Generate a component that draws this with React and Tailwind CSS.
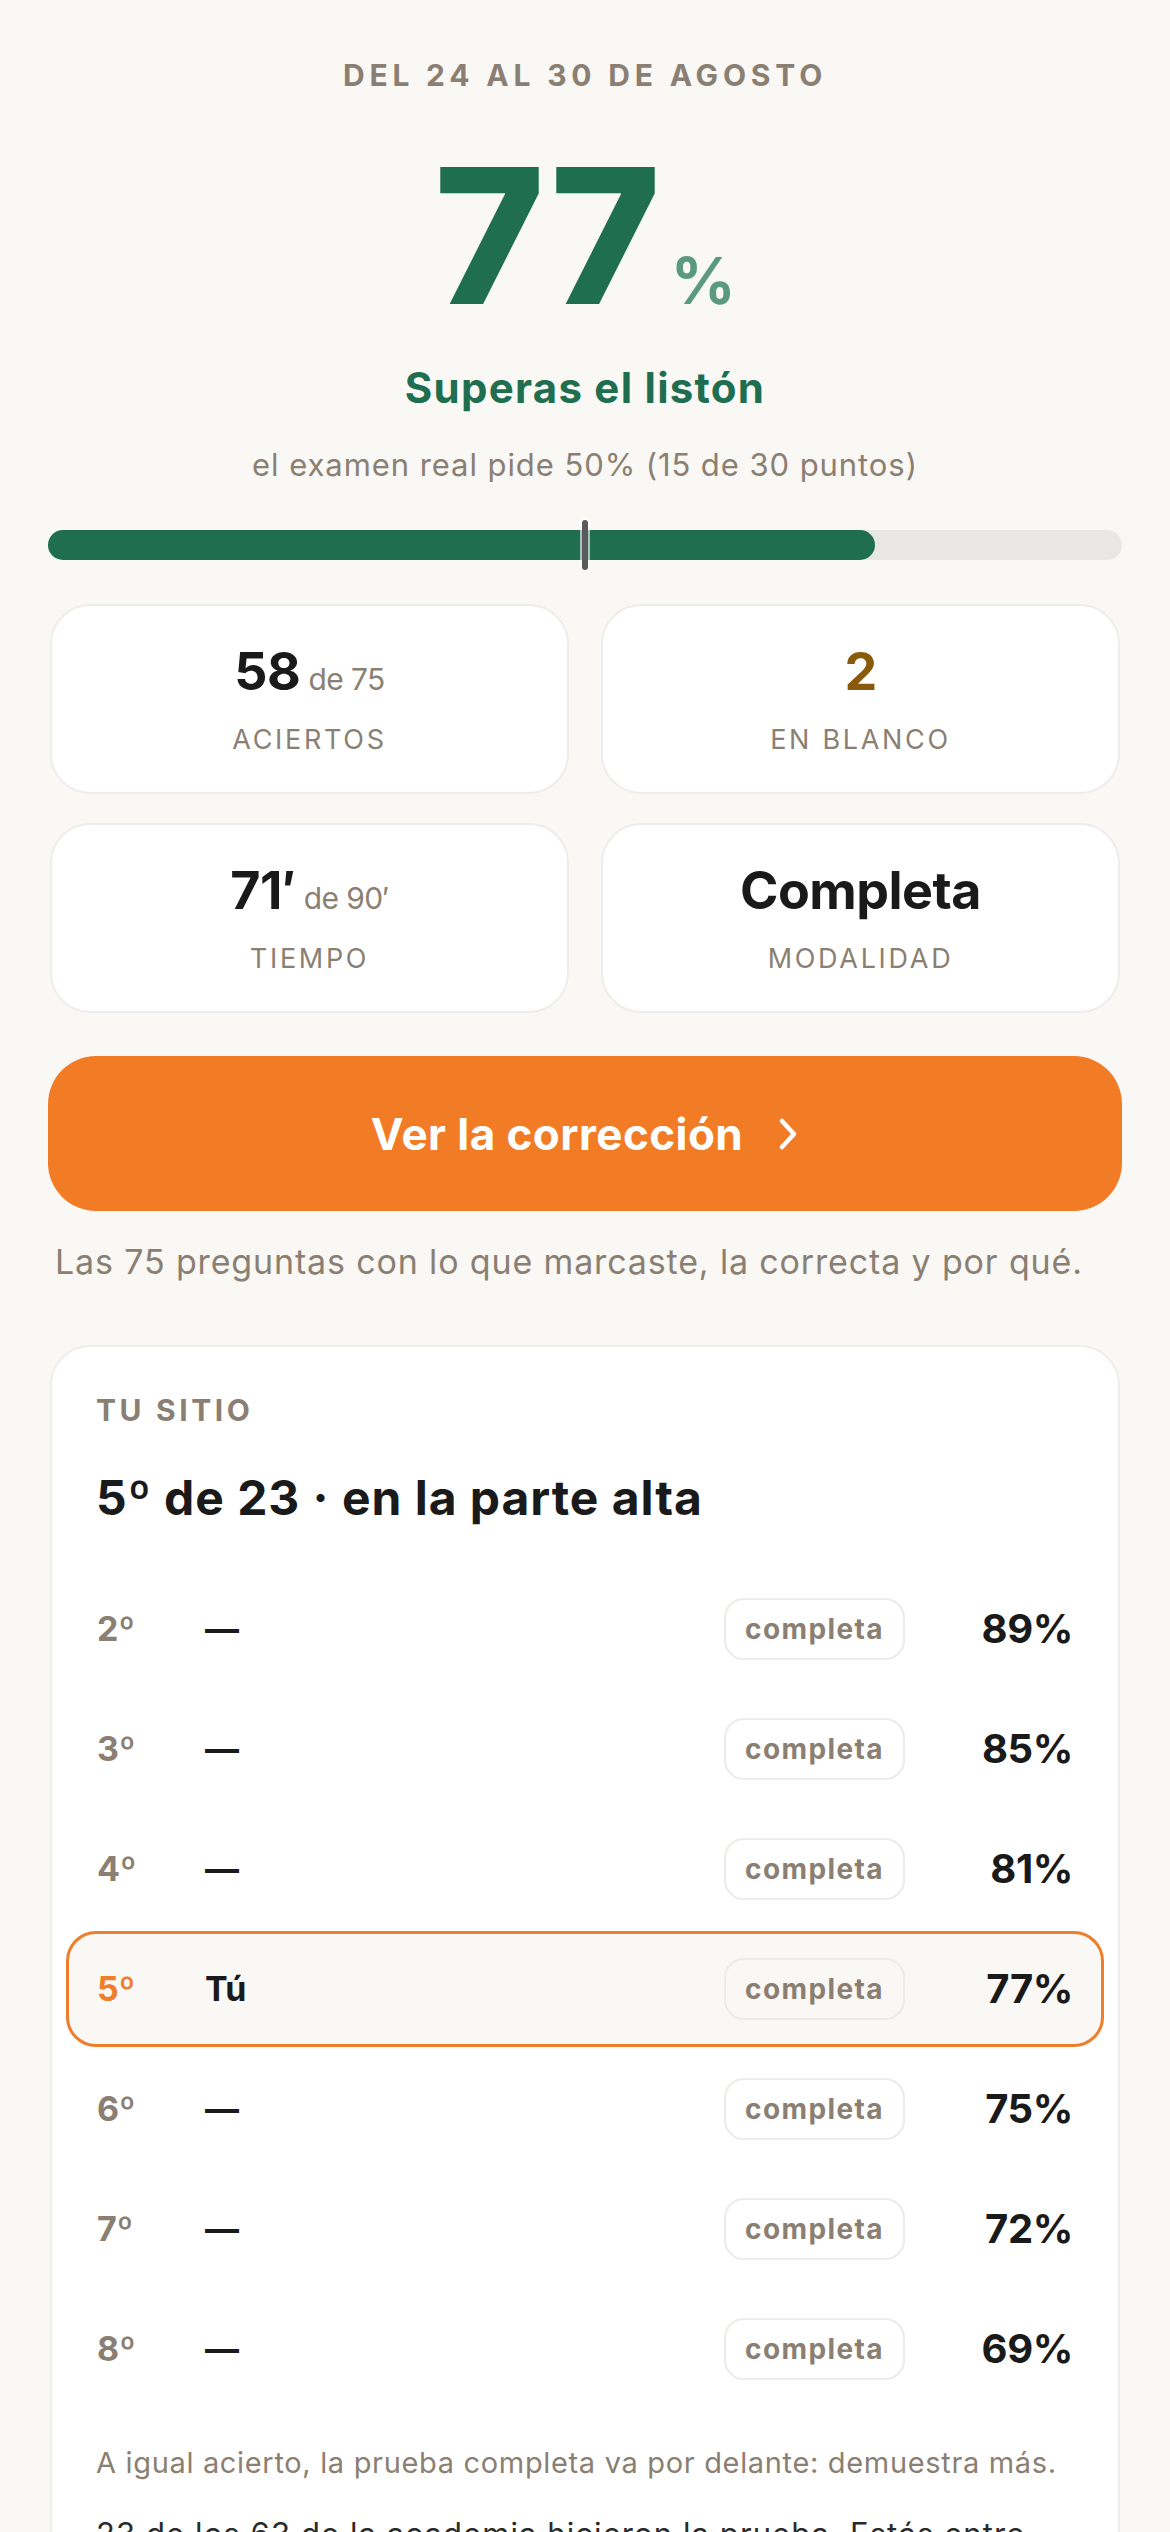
import React from 'react';

const stats = [
  { value: '58', extra: 'de 75', label: 'ACIERTOS', tone: 'text-[#1a1a1a]' },
  { value: '2', extra: null, label: 'EN BLANCO', tone: 'text-[#8a5a0c]' },
  { value: '71′', extra: 'de 90′', label: 'TIEMPO', tone: 'text-[#1a1a1a]' },
  { value: 'Completa', extra: null, label: 'MODALIDAD', tone: 'text-[#1a1a1a]' },
];

const ranking = [
  { pos: '2º', name: '—', mode: 'completa', pct: '89%' },
  { pos: '3º', name: '—', mode: 'completa', pct: '85%' },
  { pos: '4º', name: '—', mode: 'completa', pct: '81%' },
  { pos: '5º', name: 'Tú', mode: 'completa', pct: '77%', me: true },
  { pos: '6º', name: '—', mode: 'completa', pct: '75%' },
  { pos: '7º', name: '—', mode: 'completa', pct: '72%' },
  { pos: '8º', name: '—', mode: 'completa', pct: '69%' },
];

const StatCard = ({ value, extra, label, tone }) => (
  <div className="h-[190px] bg-white border-2 border-[#efede9] rounded-[40px] flex flex-col items-center justify-center gap-[28px]">
    <div className="flex items-baseline gap-[8px]">
      <span className={`text-[52px] leading-none font-bold tracking-[-0.01em] ${tone}`}>{value}</span>
      {extra && <span className="text-[30px] leading-none text-[#8a7f72] tracking-[-0.02em]">{extra}</span>}
    </div>
    <div className="text-[27px] leading-none tracking-[0.1em] text-[#8a7f72]">{label}</div>
  </div>
);

const RankRow = ({ pos, name, mode, pct, me }) => (
  <div
    className={`h-[116px] flex items-center pl-[28px] pr-[28px] rounded-[30px] ${
      me ? 'border-[3px] border-[#ee7d2c] bg-[#faf8f4]' : 'border-[3px] border-transparent'
    }`}
  >
    <div className={`w-[108px] text-[34px] leading-none font-bold ${me ? 'text-[#ee7d2c]' : 'text-[#8a7f72]'}`}>{pos}</div>
    <div className="flex-1 text-[34px] leading-none font-bold text-[#1a1a1a]">{name}</div>
    <div className="h-[62px] px-[19px] flex items-center border-2 border-[#edebe7] rounded-[20px] text-[28px] font-bold tracking-[0.05em] text-[#8a7f72]">
      {mode}
    </div>
    <div className="w-[168px] text-right text-[40px] leading-none font-bold tracking-[-0.01em] text-[#1a1a1a]">{pct}</div>
  </div>
);

export default function App() {
  return (
    <div className="min-h-[2532px] bg-[#f9f8f5] px-[48px] pt-[60px] pb-[80px] font-['Inter',sans-serif]">
      <div className="text-center text-[30px] leading-none font-bold tracking-[0.16em] text-[#8a7f72]">
        DEL 24 AL 30 DE AGOSTO
      </div>

      <div className="mt-[52px] flex items-baseline justify-center">
        <span className="text-[188px] leading-none font-extrabold tracking-[0.01em] text-[#1f6e50]">77</span>
        <span className="ml-[8px] text-[64px] leading-none font-bold text-[#5c9a7f]">%</span>
      </div>

      <div className="mt-[37px] text-center text-[42px] leading-none font-bold tracking-[0.03em] text-[#1f6e50]">
        Superas el listón
      </div>
      <div className="mt-[40px] text-center text-[31px] leading-none tracking-[0.03em] text-[#8a7f72]">
        el examen real pide 50% (15 de 30 puntos)
      </div>

      <div className="relative mt-[50px] h-[30px] rounded-full bg-[#e9e7e3]">
        <div className="h-full w-[77%] rounded-full bg-[#1f6e50]" />
        <div className="absolute left-[50%] -top-[10px] -ml-[3px] h-[50px] w-[6px] rounded-full bg-[#5a5a5a] ring-2 ring-white/60" />
      </div>

      <div className="mt-[44px] grid grid-cols-2 gap-x-[32px] gap-y-[29px] px-[2px]">
        {stats.map((s) => (
          <StatCard key={s.label} {...s} />
        ))}
      </div>

      <button className="mt-[43px] w-full h-[155px] rounded-[48px] bg-[#f27c26] flex items-center justify-center gap-[34px] text-white">
        <span className="text-[44px] leading-none font-bold tracking-[0.01em]">Ver la corrección</span>
        <svg width="22" height="34" viewBox="0 0 22 34" fill="none">
          <path d="M5 4 L17 17 L5 30" stroke="white" strokeWidth="4.5" strokeLinecap="round" strokeLinejoin="round" />
        </svg>
      </button>

      <p className="mt-[34px] pl-[7px] text-[34px] leading-none tracking-[0.025em] text-[#8a7f72]">
        Las 75 preguntas con lo que marcaste, la correcta y por qué.
      </p>

      <div className="mt-[66px] mx-[2px] bg-white border-2 border-[#efede9] rounded-[40px] px-[14px] pt-[48px] pb-[60px]">
        <div className="px-[30px] text-[30px] leading-none font-bold tracking-[0.12em] text-[#8a7f72]">TU SITIO</div>
        <h2 className="mt-[49px] px-[30px] text-[48px] leading-none font-bold tracking-[0.02em] text-[#1a1a1a]">
          5º de 23 · en la parte alta
        </h2>

        <div className="mt-[49px] flex flex-col gap-[4px]">
          {ranking.map((r) => (
            <RankRow key={r.pos} {...r} />
          ))}
        </div>

        <p className="mt-[41px] px-[30px] text-[29px] leading-none tracking-[0.023em] text-[#8a7f72]">
          A igual acierto, la prueba completa va por delante: demuestra más.
        </p>
        <p className="mt-[38px] px-[30px] max-w-[1000px] text-[31px] leading-[1.2] tracking-[0.035em] text-[#2a2a2a]">
          23 de los 63 de la academia hicieron la prueba. Estás entre los mejores.
        </p>
      </div>
    </div>
  );
}
